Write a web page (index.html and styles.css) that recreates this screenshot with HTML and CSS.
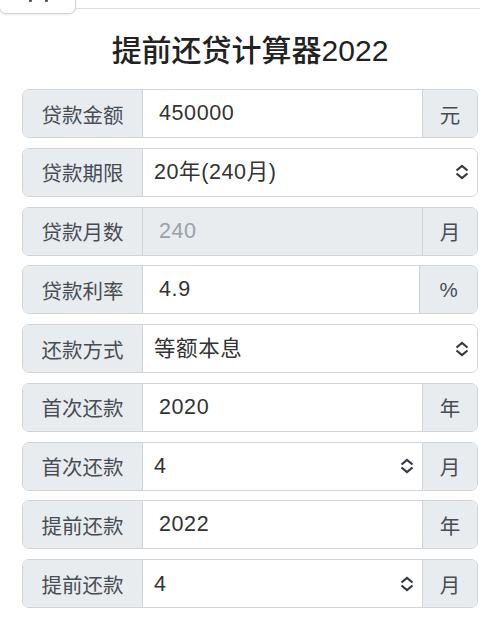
FILE: index.html
```html
<!DOCTYPE html>
<html lang="zh-CN">
<head>
  <meta charset="UTF-8">
  <meta name="viewport" content="width=device-width, initial-scale=1.0">
  <title>提前还贷计算器2022</title>
  <link rel="stylesheet" href="styles.css">
</head>
<body>
  <div class="topbar">
    <button class="back-btn" type="button" aria-label="返回"><span class="dot"></span><span class="dot"></span></button>
    <div class="topbar-line"></div>
  </div>

  <h1 class="title">提前还贷计算器2022</h1>

  <form class="calc-form" id="calcForm">
    <div class="input-group">
      <span class="addon label">贷款金额</span>
      <input class="field" type="text" name="amount" value="450000">
      <span class="addon suffix">元</span>
    </div>

    <div class="input-group">
      <span class="addon label">贷款期限</span>
      <div class="select-wrap">
        <select class="field select" name="term">
          <option>20年(240月)</option>
          <option>10年(120月)</option>
          <option>30年(360月)</option>
        </select>
        <svg class="caret" viewBox="0 0 16 16" width="16" height="16"><path d="M2.5 6.5 8 2 13.5 6.5M2.5 9.5 8 14 13.5 9.5"/></svg>
      </div>
    </div>

    <div class="input-group">
      <span class="addon label">贷款月数</span>
      <input class="field" type="text" name="months" value="240" disabled>
      <span class="addon suffix">月</span>
    </div>

    <div class="input-group">
      <span class="addon label">贷款利率</span>
      <input class="field" type="text" name="rate" value="4.9">
      <span class="addon suffix wide">%</span>
    </div>

    <div class="input-group">
      <span class="addon label">还款方式</span>
      <div class="select-wrap">
        <select class="field select" name="method">
          <option>等额本息</option>
          <option>等额本金</option>
        </select>
        <svg class="caret" viewBox="0 0 16 16" width="16" height="16"><path d="M2.5 6.5 8 2 13.5 6.5M2.5 9.5 8 14 13.5 9.5"/></svg>
      </div>
    </div>

    <div class="input-group">
      <span class="addon label">首次还款</span>
      <input class="field" type="text" name="firstYear" value="2020">
      <span class="addon suffix">年</span>
    </div>

    <div class="input-group">
      <span class="addon label">首次还款</span>
      <div class="select-wrap">
        <select class="field select" name="firstMonth">
          <option>4</option>
        </select>
        <svg class="caret" viewBox="0 0 16 16" width="16" height="16"><path d="M2.5 6.5 8 2 13.5 6.5M2.5 9.5 8 14 13.5 9.5"/></svg>
      </div>
      <span class="addon suffix">月</span>
    </div>

    <div class="input-group">
      <span class="addon label">提前还款</span>
      <input class="field" type="text" name="prepayYear" value="2022">
      <span class="addon suffix">年</span>
    </div>

    <div class="input-group">
      <span class="addon label">提前还款</span>
      <div class="select-wrap">
        <select class="field select" name="prepayMonth">
          <option>4</option>
        </select>
        <svg class="caret" viewBox="0 0 16 16" width="16" height="16"><path d="M2.5 6.5 8 2 13.5 6.5M2.5 9.5 8 14 13.5 9.5"/></svg>
      </div>
      <span class="addon suffix">月</span>
    </div>
  </form>
</body>
</html>
```

FILE: styles.css
```css
body {
  margin: 0;
  background: #fff;
  color: #212529;
  font-family: "Liberation Sans", "Noto Sans CJK SC", sans-serif;
  overflow: hidden;
}

/* top bar, scrolled mostly out of view */
.topbar {
  display: flex;
  height: 14px;
}
.back-btn {
  display: flex;
  align-items: flex-end;
  gap: 13px;
  width: 77px;
  height: 40px;
  margin-top: -26px;
  margin-left: -1px;
  padding: 0 0 11px 29px;
  box-sizing: border-box;
  border: 1px solid #cfd2d6;
  border-radius: 7px;
  background: #fff;
  box-shadow: 0 1px 2px rgba(0, 0, 0, 0.08);
}
.dot {
  width: 3px;
  height: 3px;
  background: #555;
  border-radius: 1px;
}
.topbar-line {
  flex: 1;
  height: 8px;
  margin-right: 20px;
  border-bottom: 1px solid #dcdcdc;
}

.title {
  margin: 19px 0 20px;
  text-align: center;
  font-size: 30px;
  line-height: 36px;
  font-weight: 500;
  color: #222;
}

.calc-form {
  display: flex;
  flex-direction: column;
  gap: 9.75px;
  padding: 0 22px;
}

.input-group {
  display: flex;
  flex-shrink: 0;
  height: 49px;
  box-sizing: border-box;
  border: 1px solid #ced4da;
  border-radius: 7px;
  overflow: hidden;
}

.addon {
  display: flex;
  align-items: center;
  justify-content: center;
  box-sizing: border-box;
  background: #e9ecef;
  font-size: 20.5px;
  color: #474d53;
}
.label {
  width: 120px;
  border-right: 1px solid #ced4da;
}
.suffix {
  width: 55px;
  border-left: 1px solid #ced4da;
}
.suffix.wide {
  width: 58px;
}

.field {
  flex: 1;
  min-width: 0;
  margin: 0;
  padding: 0 16px;
  border: none;
  outline: none;
  background: #fff;
  font-family: inherit;
  font-size: 21.5px;
  letter-spacing: 0.6px;
  color: #333;
}
.field:disabled {
  background: #e9ecef;
  color: #9aa1a8;
  -webkit-text-fill-color: #9aa1a8;
  opacity: 1;
}

.select-wrap {
  position: relative;
  flex: 1;
  display: flex;
}
.select {
  appearance: none;
  -webkit-appearance: none;
  padding-left: 11px;
  padding-right: 34px;
  border-radius: 0;
}
.caret {
  position: absolute;
  right: 7px;
  top: 15.5px;
  pointer-events: none;
  fill: none;
  stroke: #343a40;
  stroke-width: 2.2;
}
```
